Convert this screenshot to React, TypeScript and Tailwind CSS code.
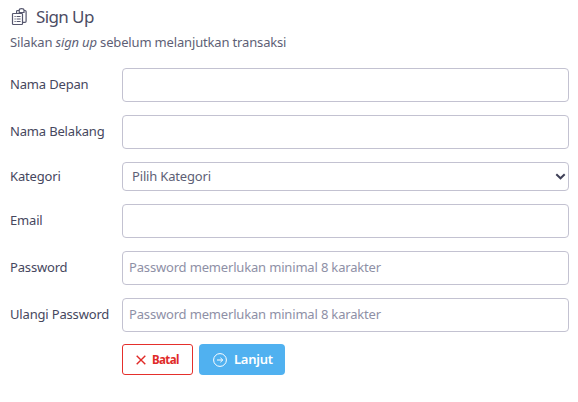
import React, { useState } from 'react';

const inputClass =
    'block w-full h-[34px] pl-[6px] pr-[7px] pb-[2px] text-[13px] tracking-[-0.17px] text-[#5e5f76] placeholder:text-[#8e90a6] placeholder:opacity-100 bg-white border border-[#c3c2d1] rounded-[4px] outline-none';

const ClipboardIcon: React.FC = () => (
    <svg width="17" height="18" viewBox="0 0 17 18" fill="none" stroke="#56576e" strokeWidth="1.2">
        <path d="M6.6 5V3.5c0-.6.3-1 1-1h1.6M14 2.5h1c.7 0 1.1.4 1.1 1v9.7c0 .7-.4 1.1-1.1 1.1h-2.4" />
        <path d="M9.2 4.5V2.3c0-1 .9-1.6 2.4-1.6s2.4.6 2.4 1.6v2.2z" />
        <rect x="2.5" y="5.5" width="10" height="11" rx=".8" />
        <path d="M4.5 8.5h1.2M6.6 8.5h4M4.5 11h1.2M6.6 11h4M4.5 13.5h1.2M6.6 13.5h4" strokeWidth="1" />
    </svg>
);

interface FieldProps {
    label: string;
    children: React.ReactNode;
}

const Field: React.FC<FieldProps> = ({ label, children }) => (
    <label className="flex items-center">
        <span className="w-[112px] shrink-0 text-[13px] tracking-[-0.17px] whitespace-nowrap text-[#46475e]">
            {label}
        </span>
        <span className="relative block flex-1">{children}</span>
    </label>
);

const SignUpPage: React.FC = () => {
    const [form, setForm] = useState({
        firstName: '',
        lastName: '',
        category: '',
        email: '',
        password: '',
        confirmPassword: '',
    });

    const handleChange = (event: React.ChangeEvent<HTMLInputElement | HTMLSelectElement>) => {
        setForm({ ...form, [event.target.name]: event.target.value });
    };

    const handleSubmit = (event: React.FormEvent) => {
        event.preventDefault();
        console.log(form);
    };

    return (
        <div className="w-full h-[402px] bg-white pl-[10px] pr-[9px] pt-[7px] font-['Noto_Sans','Open_Sans',sans-serif] text-[#5e5f76]">
            <h1 className="flex items-center h-5 text-[17px] text-[#4c4d64]">
                <ClipboardIcon />
                <span className="ml-[9px] tracking-[-0.6px]">Sign Up</span>
            </h1>
            <p className="mt-[5px] h-5 leading-5 text-[13px] tracking-[-0.16px] whitespace-nowrap">
                Silakan <em>sign up</em> sebelum melanjutkan transaksi
            </p>
            <form className="mt-4 flex flex-col gap-[13px]" onSubmit={handleSubmit}>
                <Field label="Nama Depan">
                    <input name="firstName" type="text" value={form.firstName} onChange={handleChange} className={inputClass} />
                </Field>
                <Field label="Nama Belakang">
                    <input name="lastName" type="text" value={form.lastName} onChange={handleChange} className={inputClass} />
                </Field>
                <Field label="Kategori">
                    <select
                        name="category"
                        value={form.category}
                        onChange={handleChange}
                        className="block w-full h-[29px] pl-[9px] pr-6 text-[13px] tracking-[-0.17px] appearance-none bg-white border border-[#c3c2d1] rounded-[4px] outline-none"
                    >
                        <option value="">Pilih Kategori</option>
                    </select>
                    <svg
                        className="absolute right-[3px] top-[11px] pointer-events-none"
                        width="11"
                        height="8"
                        viewBox="0 0 11 8"
                        fill="none"
                        stroke="#3f4057"
                        strokeWidth="2"
                    >
                        <path d="M1.3 1.3l4.2 4 4.2-4" />
                    </svg>
                </Field>
                <Field label="Email">
                    <input name="email" type="email" value={form.email} onChange={handleChange} className={inputClass} />
                </Field>
                <Field label="Password">
                    <input
                        name="password"
                        type="password"
                        placeholder="Password memerlukan minimal 8 karakter"
                        value={form.password}
                        onChange={handleChange}
                        className={inputClass}
                    />
                </Field>
                <Field label="Ulangi Password">
                    <input
                        name="confirmPassword"
                        type="password"
                        placeholder="Password memerlukan minimal 8 karakter"
                        value={form.confirmPassword}
                        onChange={handleChange}
                        className={inputClass}
                    />
                </Field>
                <div className="-mt-px ml-[112px] flex gap-[6px]">
                    <button
                        type="button"
                        className="flex items-center pl-[13px] w-[71px] h-[31px] text-[11.5px] font-bold text-[#e02a27] border border-[#e52f2c] rounded-[3px]"
                    >
                        <svg width="10" height="10" viewBox="0 0 10 10" fill="none" stroke="currentColor" strokeWidth="1.4">
                            <path d="M.7.7l8.6 8.6M9.3.7L.7 9.3" />
                        </svg>
                        <span className="ml-[6px] tracking-[-0.6px]">Batal</span>
                    </button>
                    <button
                        type="submit"
                        className="flex items-center pl-[14px] w-[86px] h-[31px] text-[13px] font-semibold text-white bg-[#50b1f0] rounded-[4px]"
                    >
                        <svg width="14" height="14" viewBox="0 0 14 14" fill="none" stroke="currentColor" strokeWidth="1">
                            <circle cx="7" cy="7" r="6.4" />
                            <path d="M4 7h5.6M7.4 4.8L9.8 7 7.4 9.2" />
                        </svg>
                        <span className="ml-[7px] tracking-[-0.25px]">Lanjut</span>
                    </button>
                </div>
            </form>
        </div>
    );
};

export default SignUpPage;
